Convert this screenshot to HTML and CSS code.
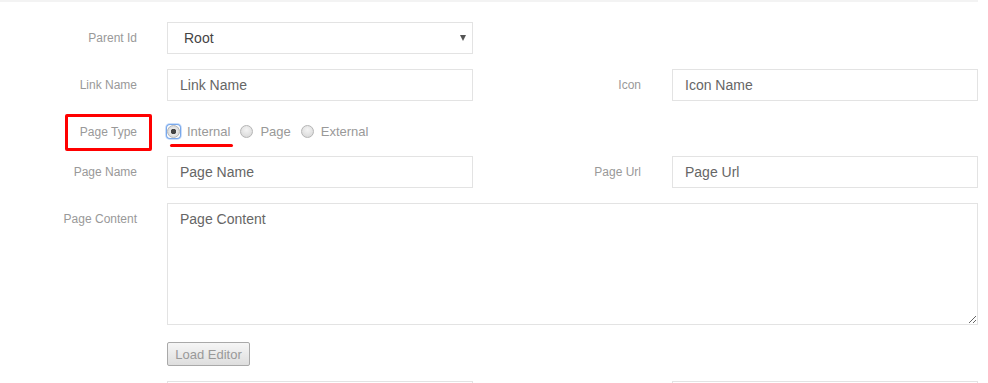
FILE: index.html
```html
<!DOCTYPE html>
<html lang="en">
<head>
    <meta charset="UTF-8">
    <meta name="viewport" content="width=device-width, initial-scale=1.0">
    <title>Menu Link Form</title>
    <link rel="stylesheet" href="styles.css">
</head>
<body>
    <form class="link-form">
        <!-- Parent -->
        <div class="form-row">
            <label class="form-label">Parent Id</label>
            <div class="select-wrap">
                <select class="form-control">
                    <option>Root</option>
                </select>
            </div>
        </div>

        <!-- Link name / icon -->
        <div class="form-row">
            <label class="form-label">Link Name</label>
            <input class="form-control" type="text" placeholder="Link Name">
            <label class="form-label second">Icon</label>
            <input class="form-control" type="text" placeholder="Icon Name">
        </div>

        <!-- Page type -->
        <div class="form-row radio-row">
            <div class="form-label"><span class="marked">Page Type</span></div>
            <div class="radio-group">
                <label class="radio-inline first">
                    <span class="focus-ring"><input type="radio" name="pageType" checked></span>
                    Internal
                    <span class="underline"></span>
                </label>
                <label class="radio-inline"><input type="radio" name="pageType"> Page</label>
                <label class="radio-inline"><input type="radio" name="pageType"> External</label>
            </div>
        </div>

        <!-- Page name / url -->
        <div class="form-row">
            <label class="form-label">Page Name</label>
            <input class="form-control" type="text" placeholder="Page Name">
            <label class="form-label second">Page Url</label>
            <input class="form-control" type="text" placeholder="Page Url">
        </div>

        <!-- Content -->
        <div class="form-row top">
            <label class="form-label">Page Content</label>
            <textarea class="form-control wide" placeholder="Page Content"></textarea>
        </div>

        <div class="form-row offset">
            <button type="button" class="btn-load" disabled>Load Editor</button>
        </div>

        <div class="form-row">
            <label class="form-label"></label>
            <input class="form-control" type="text">
            <label class="form-label second"></label>
            <input class="form-control" type="text">
        </div>
    </form>
</body>
</html>
```

FILE: styles.css
```css
body {
    margin: 0;
    font-family: "Liberation Sans", Arial, sans-serif;
    background: #fff;
}

.link-form {
    width: 978px;
    border-top: 2px solid #f3f3f3;
    padding-top: 20px;
}

.form-row {
    display: flex;
    align-items: center;
    margin-bottom: 15px;
}

.form-row.top {
    align-items: flex-start;
}

.form-row.top .form-label {
    padding-top: 9px;
}

.form-row.offset {
    padding-left: 167px;
}

.form-label {
    box-sizing: border-box;
    width: 167px;
    padding-right: 30px;
    text-align: right;
    font-size: 12px;
    color: #999;
}

.form-label.second {
    width: 199px;
    padding-right: 31px;
}

.form-control {
    box-sizing: border-box;
    width: 306px;
    height: 32px;
    padding: 0 12px;
    border: 1px solid #e3e3e3;
    border-radius: 0;
    background: #fff;
    font-family: inherit;
    font-size: 14px;
    color: #555;
    outline: none;
}

.form-control::placeholder {
    color: #666;
}

.select-wrap {
    position: relative;
}

.select-wrap select {
    appearance: none;
    -webkit-appearance: none;
    padding-left: 16px;
    color: #444;
}

.select-wrap::after {
    content: "";
    position: absolute;
    right: 7px;
    top: 13px;
    border-left: 3.5px solid transparent;
    border-right: 3.5px solid transparent;
    border-top: 6px solid #555;
}

textarea.form-control.wide {
    width: 811px;
    height: 122px;
    padding: 6px 12px;
    line-height: 18px;
    resize: both;
}

/* page type */
.radio-row {
    padding-top: 5px;
}

.marked {
    display: inline-block;
    border: 3px solid #f00;
    border-radius: 2px;
    padding: 8px 12px;
    margin: -7px -15px -10px 0;
    line-height: 15px;
}

.radio-group {
    display: flex;
    align-items: center;
    height: 20px;
    font-size: 13px;
    color: #999;
}

.radio-inline {
    position: relative;
    display: flex;
    align-items: center;
    margin-right: 10px;
}

.radio-inline input {
    appearance: none;
    -webkit-appearance: none;
    box-sizing: border-box;
    width: 13px;
    height: 13px;
    margin: 0 7px 0 0;
    border: 1px solid #b5b5b5;
    border-radius: 50%;
    background: radial-gradient(circle at 50% 35%, #f4f4f4, #d4d4d4);
}

.radio-inline input:checked {
    background: radial-gradient(circle, #444 0 2.5px, #e9e9e9 3px, #cfcfcf);
}

.focus-ring {
    display: flex;
    margin-right: 7px;
    border-radius: 3px;
    box-shadow: 0 0 0 1px rgba(94, 150, 230, 0.75), 0 0 0 2px rgba(150, 190, 245, 0.5);
}

.focus-ring input {
    margin: 0;
}

.underline {
    position: absolute;
    left: 3px;
    right: -3px;
    top: 20px;
    height: 3px;
    border-radius: 2px;
    background: #f00;
}

.btn-load {
    width: 83px;
    height: 24px;
    padding: 0 6px;
    border: 1px solid #a9a9a9;
    border-radius: 2px;
    background: linear-gradient(#f6f6f6, #dedede);
    font-family: inherit;
    font-size: 13px;
    color: #999;
    margin-top: 2px;
}
```
